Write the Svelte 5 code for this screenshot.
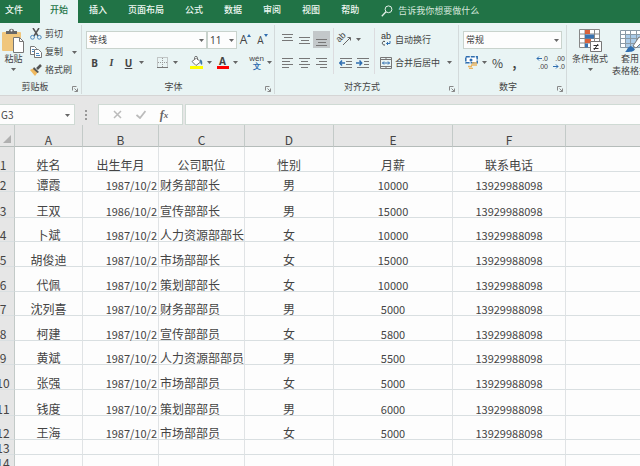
<script lang="ts">
	const tabs = ['文件', '开始', '插入', '页面布局', '公式', '数据', '审阅', '视图', '帮助'];
	let activeTab = $state('开始');
	let cellName = $state('G3');
	let formula = $state('');

	const columns = ['A', 'B', 'C', 'D', 'E', 'F', ''];

	const rows = [
		{ height: 25, cells: ['姓名', '出生年月', '公司职位', '性别', '月薪', '联系电话'] },
		{ height: 20, cells: ['谭霞', '1987/10/2', '财务部部长', '男', '10000', '13929988098'] },
		{ height: 26, cells: ['王双', '1986/10/2', '宣传部部长', '男', '15000', '13929988098'] },
		{ height: 24, cells: ['卜斌', '1987/10/2', '人力资源部部长', '女', '10000', '13929988098'] },
		{ height: 25, cells: ['胡俊迪', '1987/10/2', '市场部部长', '女', '15000', '13929988098'] },
		{ height: 25, cells: ['代佩', '1987/10/2', '策划部部长', '女', '10000', '13929988098'] },
		{ height: 24, cells: ['沈列喜', '1987/10/2', '财务部部员', '男', '5000', '13929988098'] },
		{ height: 25, cells: ['柯建', '1987/10/2', '宣传部部员', '女', '5800', '13929988098'] },
		{ height: 24, cells: ['黄斌', '1987/10/2', '人力资源部部员', '男', '5500', '13929988098'] },
		{ height: 25, cells: ['张强', '1987/10/2', '市场部部员', '女', '5000', '13929988098'] },
		{ height: 26, cells: ['钱度', '1987/10/2', '策划部部员', '男', '6000', '13929988098'] },
		{ height: 24, cells: ['王海', '1987/10/2', '市场部部员', '女', '5000', '13929988098'] },
		{ height: 15, cells: ['', '', '', '', '', ''] },
		{ height: 15, cells: ['', '', '', '', '', ''] }
	];

	const isNumeric = (text: string) => /^[\d/]+$/.test(text);
</script>

{#snippet caret()}
	<svg class="caret" width="5" height="3" viewBox="0 0 5 3"><path d="M0 0h5L2.5 3z" fill="#666" /></svg>
{/snippet}

{#snippet lines(list: number[][])}
	<svg width="12" height="12" viewBox="0 0 12 12">
		{#each list as [x, y, w]}
			<rect {x} {y} width={w} height="1" fill="#777" />
		{/each}
	</svg>
{/snippet}

{#snippet footer(title: string)}
	<div class="footer">
		<span>{title}</span>
		<button class="launcher" aria-label="{title}设置">
			<svg width="6" height="6" viewBox="0 0 6 6" fill="none" stroke="#888">
				<path d="M.5 4.500V.5h4M2.500 2.500l3 3M5.500 2.500v3h-3" />
			</svg>
		</button>
	</div>
{/snippet}

<div class="excel">
	<nav class="tabs">
		{#each tabs as tab (tab)}
			<button class="tab" class:active={tab === activeTab} onclick={() => (activeTab = tab)}>{tab}</button>
		{/each}
		<button class="tell-me">
			<svg width="12" height="12" viewBox="0 0 12 12" fill="none" stroke="#e4f1e9">
				<circle cx="7.500" cy="4.300" r="3.400" />
				<path d="M5 6.800L.8 11.200" stroke-width="1.300" />
			</svg>
			告诉我你想要做什么
		</button>
	</nav>

	<div class="ribbon">
		<section class="group clipboard">
			<div class="body">
				<button class="big paste">
					<svg width="23" height="25" viewBox="0 0 23 25">
						<rect y="4" width="19" height="19" rx="1" fill="#f0c67c" />
						<path d="M4 6V3h3c0-3 5-3 5 0h3v3z" fill="#666" />
						<circle cx="9.500" cy="2.500" r="1" fill="#fff" />
						<path d="M11.500 9.500h6l4 4v11h-10z" fill="#fff" stroke="#777" />
						<path d="M17.500 9.500v4h4" fill="none" stroke="#777" />
					</svg>
					<span>粘贴</span>
					{@render caret()}
				</button>
				<div class="stack">
					<button class="tool">
						<svg width="12" height="12" viewBox="0 0 12 12" fill="none">
							<path d="M3 0l5 8M9 0L4 8" stroke="#555" stroke-width="1.500" />
							<circle cx="2.500" cy="9.300" r="1.900" stroke="#4b87bd" />
							<circle cx="9.300" cy="9.300" r="1.900" stroke="#4b87bd" />
						</svg>
						剪切
					</button>
					<button class="tool">
						<svg width="12" height="12" viewBox="0 0 12 12" fill="#fff" stroke="#777">
							<path d="M.5.5h4l2 2v6h-6z" />
							<path d="M4.500 3.500h4l3 3v5h-7z" />
							<path d="M2 3.500h2M2 5.500h2M6 7.500h3M6 9.500h4" stroke="#4b87bd" />
						</svg>
						复制
						<span class="spread">{@render caret()}</span>
					</button>
					<button class="tool">
						<svg width="12" height="12" viewBox="0 0 12 12">
							<path d="M0 6l4-2 4 4-3 4z" fill="#f0b95f" />
							<path d="M4 3l5 5-1.500 1L3 5z" fill="#555" />
							<path d="M7 5l4-4" stroke="#555" stroke-width="2.500" />
						</svg>
						格式刷
					</button>
				</div>
			</div>
			{@render footer('剪贴板')}
		</section>

		<section class="group font">
			<div class="row">
				<label class="combo grow">
					<select aria-label="字体"><option>等线</option></select>
					{@render caret()}
				</label>
				<label class="combo size">
					<select aria-label="字号"><option>11</option></select>
					{@render caret()}
				</label>
				<button class="icon letter" aria-label="增大字号">
					A<svg width="4" height="3" viewBox="0 0 4 3"><path d="M0 3h4L2 0z" fill="#2f6eb0" /></svg>
				</button>
				<button class="icon letter small" aria-label="减小字号">
					A<svg width="4" height="3" viewBox="0 0 4 3"><path d="M0 0h4L2 3z" fill="#2f6eb0" /></svg>
				</button>
			</div>
			<div class="row">
				<button class="icon glyph"><b>B</b></button>
				<button class="icon glyph"><i>I</i></button>
				<button class="icon glyph"><u>U</u></button>
				<button class="drop" aria-label="下划线选项">{@render caret()}</button>
				<span class="sep"></span>
				<button class="icon" aria-label="边框">
					<svg width="11" height="11" viewBox="0 0 11 11" fill="none" stroke="#999">
						<path d="M.5.5h10v10H.5zM5.500 1v9M1 5.500h9" stroke-dasharray="1 1" />
						<path d="M0 10.500h11" stroke="#777" />
					</svg>
				</button>
				<button class="drop" aria-label="边框选项">{@render caret()}</button>
				<span class="sep"></span>
				<button class="icon" aria-label="填充颜色">
					<svg width="13" height="13" viewBox="0 0 13 13">
						<path d="M2 5.500L6.500 2l4 4L6 9.500z" fill="#fff" stroke="#777" />
						<path d="M4.500 4V1.500c0-1.500 3-1.500 3 0V4" fill="none" stroke="#777" />
						<path d="M10 3.500c2.500.5 2.500 3 2 5.500-1.500-1-2-2-2-5.500z" fill="#3f78a8" />
						<rect y="10" width="13" height="3" fill="#ff0" />
					</svg>
				</button>
				<button class="drop" aria-label="填充选项">{@render caret()}</button>
				<button class="icon fontcolor"><span>A</span></button>
				<button class="drop" aria-label="颜色选项">{@render caret()}</button>
				<span class="sep"></span>
				<button class="icon pinyin"><span>wén</span><span class="wen">文</span></button>
				<button class="drop" aria-label="拼音选项">{@render caret()}</button>
			</div>
			{@render footer('字体')}
		</section>

		<section class="group align">
			<div class="body">
				<div class="block">
					<div class="row">
						<button class="icon" aria-label="顶端对齐">{@render lines([[0, 0, 11], [2, 3, 8], [0, 6, 11]])}</button>
						<button class="icon" aria-label="垂直居中">{@render lines([[0, 3, 11], [2, 6, 8], [0, 9, 11]])}</button>
						<button class="icon pressed" aria-label="底端对齐">{@render lines([[0, 5, 11], [2, 8, 8], [0, 11, 11]])}</button>
					</div>
					<div class="row">
						<button class="icon" aria-label="左对齐">{@render lines([[0, 1, 11], [0, 4, 8], [0, 7, 11], [0, 10, 7]])}</button>
						<button class="icon" aria-label="居中">{@render lines([[0, 1, 11], [2, 4, 7], [0, 7, 11], [2, 10, 7]])}</button>
						<button class="icon" aria-label="右对齐">{@render lines([[0, 1, 11], [3, 4, 8], [0, 7, 11], [4, 10, 7]])}</button>
					</div>
				</div>
				<div class="block ruled">
					<div class="row">
						<button class="icon" aria-label="方向">
							<svg class="text-icon" width="13" height="13" viewBox="0 0 13 13" fill="none" stroke="#666">
								<text x="0" y="9" transform="rotate(-45 1 9)" font-size="9" stroke="none" fill="#444">ab</text>
								<path d="M4 12l7-7M8.500 4.500h3v3" />
							</svg>
						</button>
						<button class="drop" aria-label="方向选项">{@render caret()}</button>
					</div>
					<div class="row">
						<button class="icon" aria-label="减少缩进量">
							<svg width="13" height="12" viewBox="0 0 13 12" fill="none" stroke="#777">
								<path d="M1 1.500h12M7 4.500h6M7 7.500h6M1 10.500h12" />
								<path d="M6 6H1M3 3.500L.8 6 3 8.500" stroke="#2f6eb0" stroke-width="1.500" />
							</svg>
						</button>
						<button class="icon" aria-label="增加缩进量">
							<svg width="13" height="12" viewBox="0 0 13 12" fill="none" stroke="#777">
								<path d="M1 1.500h12M8 4.500h5M8 7.500h5M1 10.500h12" />
								<path d="M0 6h5M3.500 3.500L5.700 6 3.500 8.500" stroke="#2f6eb0" stroke-width="1.500" />
							</svg>
						</button>
					</div>
				</div>
				<div class="block ruled wide">
					<div class="row">
						<button class="tool">
							<svg class="text-icon" width="12" height="13" viewBox="0 0 12 13" fill="none">
								<text x="1" y="6" font-size="9" fill="#333">ab</text>
								<path d="M5 8.500c-3-1.500-4 4 0 3.500" stroke="#444" />
								<path d="M10 8v2.500H6.500M8 9L6.500 10.500 8 12" stroke="#2f6eb0" />
							</svg>
							自动换行
						</button>
					</div>
					<div class="row">
						<button class="tool">
							<svg width="12" height="12" viewBox="0 0 12 12" fill="none" stroke="#777">
								<path d="M.5.5h11v11H.5zM.5 2.500h11M.5 9.500h11M6 .5v2M6 9.500v2" />
								<path d="M2.500 6h7M4 4.500L2.500 6 4 7.500M8 4.500L9.500 6 8 7.500" stroke="#2f6eb0" />
							</svg>
							合并后居中
						</button>
						<button class="drop" aria-label="合并选项">{@render caret()}</button>
					</div>
				</div>
			</div>
			{@render footer('对齐方式')}
		</section>

		<section class="group number">
			<div class="row">
				<label class="combo grow">
					<select aria-label="数字格式"><option>常规</option></select>
					{@render caret()}
				</label>
			</div>
			<div class="row">
				<button class="icon" aria-label="会计数字格式">
					<svg width="13" height="13" viewBox="0 0 13 13" fill="none">
						<path d="M.8.800h11.400v6H.8z" fill="#fff" stroke="#2f6eb0" stroke-width="1.500" stroke-dasharray="4 1" />
						<circle cx="6" cy="4" r="1.500" fill="#2f6eb0" />
						<g stroke="#e9b461" stroke-width="1.500">
							<path d="M7 7h5M6 9h6M3 10.500h4M4 12.500h4" />
						</g>
					</svg>
				</button>
				<button class="drop" aria-label="会计选项">{@render caret()}</button>
				<button class="icon percent">%</button>
				<button class="icon percent"><b>,</b></button>
				<span class="sep"></span>
				<button class="icon decimals" aria-label="增加小数位数">
					<span><svg width="6" height="5" viewBox="0 0 6 5" fill="none" stroke="#2f6eb0"><path d="M6 2.500H1M3 .5l-2 2 2 2" /></svg>.0</span>
					<span>.00</span>
				</button>
				<button class="icon decimals" aria-label="减少小数位数">
					<span>.00</span>
					<span><svg width="6" height="5" viewBox="0 0 6 5" fill="none" stroke="#2f6eb0"><path d="M0 2.500h5M3 .5l2 2-2 2" /></svg>.0</span>
				</button>
			</div>
			{@render footer('数字')}
		</section>

		<section class="group styles">
			<div class="body">
				<button class="big">
					<svg width="24" height="25" viewBox="0 0 24 25">
						<path d="M1.500 1.500h20v18h-20zM7 1v19M16.500 1v19M1 6h21M1 10.500h21M1 15h21" fill="#fff" stroke="#888" />
						<path d="M7 2h5v4H7z" fill="#d9623b" />
						<path d="M7 6.500h9v4H7z" fill="#3a73b0" />
						<path d="M7 11h6v4H7z" fill="#d9623b" />
						<path d="M7 15.500h3v4H7z" fill="#3a73b0" />
						<path d="M12.500 13.500h11v10h-11z" fill="#fff" stroke="#777" />
						<path d="M15.500 17.500h5M15.500 20.500h5M20 16l-4 6" stroke="#333" fill="none" />
					</svg>
					<span>条件格式</span>
					{@render caret()}
				</button>
				<button class="big">
					<svg width="24" height="25" viewBox="0 0 24 25">
						<path d="M2.500 2.500h21v17h-21z" fill="#fff" />
						<path d="M8 7h16v13H8z" fill="#aacbe8" />
						<path d="M2.500 2.500h21v17h-21zM7.500 3v17M12.500 3v17M18.500 3v17M2 6.500h22M2 10.500h22M2 15.500h22" fill="none" stroke="#8a9aa6" />
						<path d="M7 24c2-1 2-5 6-6l4 3c-1 3-5 3-10 3z" fill="#2f6eb0" />
						<path d="M15 18l6-9 3 1v4l-6 6z" fill="#fff" stroke="#777" />
					</svg>
					<span>套用</span>
					<span>表格格式</span>
				</button>
			</div>
		</section>
	</div>

	<div class="formula-bar">
		<label class="name-box">
			<input aria-label="名称框" bind:value={cellName} />
			{@render caret()}
		</label>
		<svg class="dots" width="2" height="10" viewBox="0 0 2 10" fill="#999">
			<path d="M0 0h2v2H0zM0 4h2v2H0zM0 8h2v2H0z" />
		</svg>
		<div class="entry">
			<button aria-label="取消">
				<svg width="9" height="9" viewBox="0 0 9 9"><path d="M1 1l7 7M8 1L1 8" stroke="#bbb" stroke-width="1.500" /></svg>
			</button>
			<button aria-label="输入">
				<svg width="10" height="9" viewBox="0 0 10 9"><path d="M.5 5L4 8l5.500-7" fill="none" stroke="#bbb" stroke-width="1.800" /></svg>
			</button>
			<button class="fx">f<small>x</small></button>
		</div>
		<input class="formula" aria-label="编辑栏" bind:value={formula} />
	</div>

	<div class="sheet">
		<table>
			<colgroup>
				<col class="col-head" />
				<col class="col-a" />
				<col class="col-b" />
				<col class="col-c" />
				<col class="col-d" />
				<col class="col-e" />
				<col class="col-f" />
				<col />
			</colgroup>
			<thead>
				<tr>
					<th class="corner">
						<svg width="8" height="8" viewBox="0 0 8 8"><path d="M8 0v8H0z" fill="#b0b0b0" /></svg>
					</th>
					{#each columns as column}
						<th scope="col">{column}</th>
					{/each}
				</tr>
			</thead>
			<tbody>
				{#each rows as row, i}
					<tr style="height: {row.height}px">
						<th scope="row">{i + 1}</th>
						{#each row.cells as cell, c}
							<td
								class:numeric={isNumeric(cell)}
								class:right={i > 0 && c === 1}
								class:left={i > 0 && c === 2}>{cell}</td
							>
						{/each}
						<td></td>
					</tr>
				{/each}
			</tbody>
		</table>
	</div>
</div>

<style>
	:global(body) {
		background: #fdfdfd;
	}

	.excel {
		height: 100vh;
		overflow: hidden;
		font-family: 'Noto Sans CJK SC', 'Noto Sans', sans-serif;
		font-size: 9px;
		line-height: 12px;
		color: #444;
	}

	.excel * {
		box-sizing: border-box;
	}

	button,
	input,
	select {
		margin: 0;
		padding: 0;
		border: none;
		border-radius: 0;
		background: none;
		font: inherit;
		color: inherit;
	}

	button {
		display: flex;
		flex: none;
		align-items: center;
		justify-content: center;
		white-space: nowrap;
	}

	svg {
		display: block;
		flex: none;
	}

	.tabs {
		display: flex;
		gap: 1px;
		height: 23px;
		background: #217346;
	}

	.tab {
		padding: 0 10px 3px;
		font-weight: 500;
		color: #eef7f1;
	}

	.tab:first-child {
		padding: 0 16px 3px 5px;
	}

	.tab.active {
		background: #e9f4f4;
		color: #217346;
	}

	.tell-me {
		gap: 5px;
		padding: 0 10px 2px 11px;
		color: #d6e8dd;
	}

	.ribbon {
		display: flex;
		height: 73px;
		overflow: hidden;
		border-bottom: 1px solid #d5d5d5;
		background: #e9f4f4;
	}

	.group {
		display: flex;
		flex: none;
		flex-direction: column;
		margin: 2px 0 1px;
		padding: 3px 3px 0 4px;
		border-right: 1px solid #d3dadb;
	}

	.clipboard {
		width: 82px;
		padding-top: 0;
		padding-left: 2px;
	}

	.font {
		width: 193px;
	}

	.align {
		width: 184px;
	}

	.number {
		width: 108px;
	}

	.styles {
		border: none;
	}

	.body {
		display: flex;
	}

	.clipboard .body {
		gap: 5px;
	}

	.row {
		display: flex;
		align-items: center;
		height: 23px;
	}

	.footer {
		display: flex;
		align-items: center;
		justify-content: center;
		height: 14px;
		margin-top: auto;
	}

	.footer span {
		flex: 1;
		padding: 0 4px 1px 0;
		text-align: center;
	}

	.launcher {
		padding-top: 3px;
	}

	.big {
		flex-direction: column;
		justify-content: flex-start;
		min-width: 38px;
	}

	.styles .body {
		gap: 2px;
	}

	.paste {
		min-width: 23px;
		padding-top: 3px;
	}

	.big .caret {
		margin-top: 3px;
	}

	.stack {
		display: flex;
		flex: 1;
		flex-direction: column;
	}

	.tool {
		justify-content: flex-start;
		gap: 3px;
	}

	.stack .tool {
		height: 18px;
	}

	.spread {
		margin-left: 6px;
	}

	.icon {
		width: 17px;
		height: 17px;
	}

	.text-icon {
		overflow: visible;
		font-family: 'Liberation Sans', sans-serif;
	}

	.drop {
		width: 9px;
		height: 17px;
	}

	.sep {
		width: 1px;
		height: 15px;
		margin: 0 4px;
		background: #d8d5da;
	}

	.combo {
		position: relative;
		display: flex;
		width: 30px;
		height: 18px;
	}

	.combo.grow {
		flex: 1;
	}

	.number .combo.grow {
		margin-right: 1px;
	}

	.combo select {
		width: 100%;
		padding: 0 2px;
		border: 1px solid #c9d3cd;
		background: #fdfdfd;
		appearance: none;
	}

	.combo.size {
		font-family: 'Noto Sans', sans-serif;
		font-size: 10px;
	}

	.combo .caret,
	.name-box .caret {
		position: absolute;
		top: 50%;
		right: 3px;
		margin-top: -1px;
		pointer-events: none;
	}

	.letter {
		align-items: center;
		font: 500 12px/16px 'Open Sans', sans-serif;
	}

	.letter svg {
		margin-bottom: 8px;
	}

	.letter.small {
		font-size: 10px;
	}

	.glyph {
		font: 10px/14px 'Noto Sans', sans-serif;
	}

	.glyph i {
		font-family: 'Liberation Serif', serif;
		font-weight: bold;
	}

	.glyph u {
		font-weight: bold;
	}

	.fontcolor span {
		width: 12px;
		border-bottom: 3px solid #f00;
		font: bold 10px/9px 'Noto Sans', sans-serif;
	}

	.pinyin {
		flex-direction: column;
		font: 8px/8px 'Liberation Sans', sans-serif;
	}

	.wen {
		font-weight: bold;
		color: #2f6eb0;
	}

	.align .block {
		padding-right: 3px;
	}

	.align .ruled {
		padding: 0 3px;
		border-left: 1px solid #dcdcdf;
	}

	.align .wide {
		padding-left: 5px;
	}

	.wide .drop {
		margin-left: 5px;
	}

	.pressed {
		background: #c3c8ca;
	}

	.percent {
		font-size: 12px;
	}

	.decimals {
		flex-direction: column;
		align-items: flex-end;
		font: 7px/8px 'Liberation Sans', sans-serif;
	}

	.decimals span {
		display: flex;
		align-items: center;
	}

	.formula-bar {
		display: flex;
		align-items: center;
		padding: 8px 0 0;
		background: #e6e6e6;
	}

	.name-box {
		position: relative;
		display: flex;
		width: 75px;
	}

	.name-box .caret {
		right: 5px;
	}

	.name-box input,
	.formula,
	.entry {
		height: 21px;
		border: 1px solid #cfdad4;
		background: #fdfdfd;
	}

	.name-box input {
		width: 100%;
		padding-left: 1px;
		border-left: none;
		font-size: 10px;
	}

	.dots {
		margin: 0 11px 0 10px;
	}

	.entry {
		display: flex;
		align-items: center;
		justify-content: space-evenly;
		width: 85px;
		margin-right: 2px;
	}

	.fx {
		font: italic bold 12px/14px 'Liberation Serif', serif;
		color: #666;
	}

	.fx small {
		font-size: 9px;
	}

	.formula {
		flex: 1;
		min-width: 0;
		padding: 0 4px;
		border-right: none;
	}

	/* the row header runs a little past the left edge of the window */
	.sheet {
		margin-left: -8px;
	}

	table {
		width: 100%;
		table-layout: fixed;
		border-spacing: 0;
		background: #fdfdfd;
		font-size: 12px;
		line-height: 12px;
	}

	.col-head {
		width: 23px;
	}

	.col-a {
		width: 68px;
	}

	.col-b {
		width: 76px;
	}

	.col-c {
		width: 86px;
	}

	.col-d {
		width: 89px;
	}

	.col-e {
		width: 119px;
	}

	.col-f {
		width: 113px;
	}

	th,
	td {
		padding: 0;
		border-right: 1px solid #e0e3e5;
		border-bottom: 1px solid #d9dfe1;
		font-weight: normal;
		text-align: center;
		vertical-align: bottom;
		white-space: nowrap;
	}

	td:last-child {
		border-right: none;
	}

	th {
		border-right-color: #c3cac8;
		background: #e6e6e6;
	}

	thead tr {
		height: 22px;
	}

	thead th {
		border-bottom-color: #b5bcba;
	}

	thead th:last-child {
		border-right: none;
	}

	.corner svg {
		margin: 0 3px 3px auto;
	}

	.numeric {
		font-size: 11px;
	}

	.right {
		padding-right: 1px;
		text-align: right;
	}

	.left {
		padding-left: 1px;
		text-align: left;
	}
</style>
